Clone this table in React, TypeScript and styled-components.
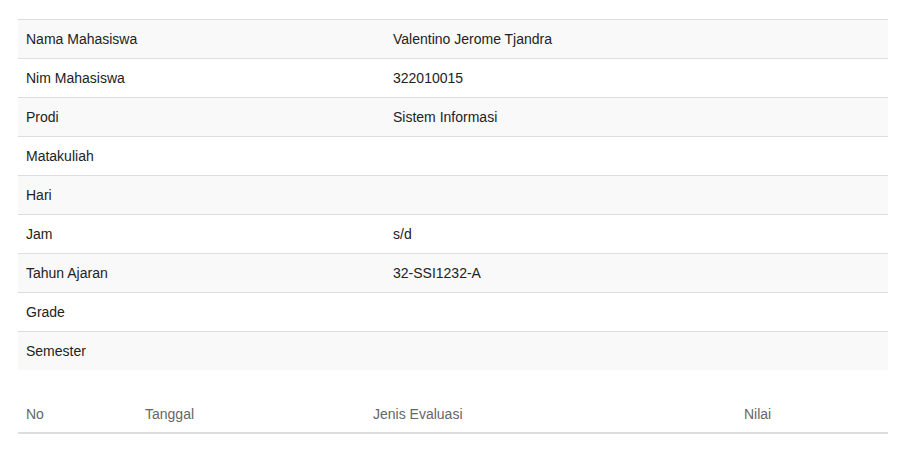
import React from 'react';
import styled, { createGlobalStyle } from 'styled-components';

const GlobalStyle = createGlobalStyle`
  body {
    margin: 0;
    background: #fff;
    font-family: "Liberation Sans", Arial, sans-serif;
    font-size: 14px;
    color: #333;
  }
`;

const Page = styled.div`
  padding: 19px 15px 0 18px;
`;

const InfoTable = styled.table`
  width: 870px;
  border-collapse: collapse;
  border-spacing: 0;
  table-layout: fixed;
`;

const InfoRow = styled.tr<{ $striped: boolean }>`
  background: ${(p) => (p.$striped ? '#f9f9f9' : '#fff')};
`;

const InfoCell = styled.td<{ $width?: number }>`
  box-sizing: border-box;
  width: ${(p) => (p.$width ? `${p.$width}px` : 'auto')};
  padding: 9px 8px;
  line-height: 20px;
  border-top: 1px solid #ddd;
  text-align: left;
  vertical-align: top;
  color: #222;
`;

const GradeTable = styled.table`
  width: 870px;
  margin-top: 26px;
  border-collapse: collapse;
  table-layout: fixed;
`;

const HeadCell = styled.th<{ $width: number }>`
  box-sizing: border-box;
  width: ${(p) => p.$width}px;
  padding: 8px;
  line-height: 20px;
  font-weight: normal;
  text-align: left;
  color: #666;
  border-bottom: 2px solid #ddd;
`;

const info: [string, string][] = [
  ['Nama Mahasiswa', 'Valentino Jerome Tjandra'],
  ['Nim Mahasiswa', '322010015'],
  ['Prodi', 'Sistem Informasi'],
  ['Matakuliah', ''],
  ['Hari', ''],
  ['Jam', 's/d'],
  ['Tahun Ajaran', '32-SSI1232-A'],
  ['Grade', ''],
  ['Semester', ''],
];

const columns: [string, number][] = [
  ['No', 119],
  ['Tanggal', 228],
  ['Jenis Evaluasi', 371],
  ['Nilai', 152],
];

const App: React.FC = () => {
  return (
    <Page>
      <GlobalStyle />
      <InfoTable>
        <tbody>
          {info.map(([label, value], i) => (
            <InfoRow key={label} $striped={i % 2 === 0}>
              <InfoCell $width={367}>{label}</InfoCell>
              <InfoCell>{value}</InfoCell>
            </InfoRow>
          ))}
        </tbody>
      </InfoTable>
      <GradeTable>
        <thead>
          <tr>
            {columns.map(([title, width]) => (
              <HeadCell key={title} $width={width}>
                {title}
              </HeadCell>
            ))}
          </tr>
        </thead>
      </GradeTable>
    </Page>
  );
};

export default App;
